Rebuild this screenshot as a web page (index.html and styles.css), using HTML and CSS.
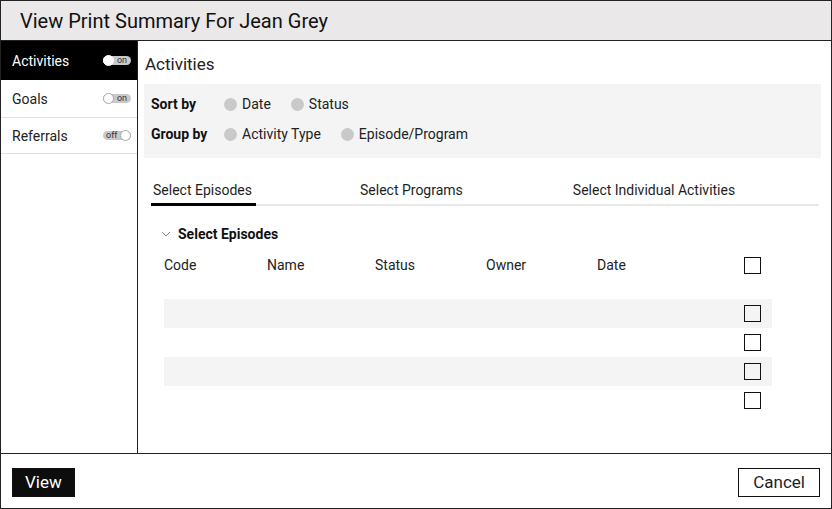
FILE: index.html
```html
<!DOCTYPE html>
<html lang="en">
<head>
  <meta charset="UTF-8">
  <meta name="viewport" content="width=device-width, initial-scale=1.0">
  <title>View Print Summary</title>
  <link rel="stylesheet" href="styles.css">
</head>
<body>
  <div class="dialog">
    <div class="dialog-header">View Print Summary For Jean Grey</div>

    <div class="dialog-body">
      <ul class="side-nav">
        <li class="nav-item active">
          <span>Activities</span>
          <span class="toggle on"><span class="knob"></span><span class="toggle-text">on</span></span>
        </li>
        <li class="nav-item">
          <span>Goals</span>
          <span class="toggle on"><span class="knob"></span><span class="toggle-text">on</span></span>
        </li>
        <li class="nav-item short">
          <span>Referrals</span>
          <span class="toggle off"><span class="toggle-text">off</span><span class="knob"></span></span>
        </li>
      </ul>

      <div class="main">
        <h2 class="main-title">Activities</h2>

        <div class="options-panel">
          <div class="option-row">
            <span class="option-label">Sort by</span>
            <span class="radio"><span class="dot"></span>Date</span>
            <span class="radio"><span class="dot"></span>Status</span>
          </div>
          <div class="option-row">
            <span class="option-label">Group by</span>
            <span class="radio"><span class="dot"></span>Activity Type</span>
            <span class="radio"><span class="dot"></span>Episode/Program</span>
          </div>
        </div>

        <div class="tabs">
          <div class="tab active">Select Episodes</div>
          <div class="tab tab-programs">Select Programs</div>
          <div class="tab tab-individual">Select Individual Activities</div>
        </div>

        <div class="section-title">
          <svg class="chevron" width="10" height="6" viewBox="0 0 10 6">
            <path d="M1 1 L5 5 L9 1" fill="none" stroke="#8a8a8a" stroke-width="1"/>
          </svg>
          Select Episodes
        </div>

        <div class="episodes">
          <div class="ep-row ep-head">
            <span class="col-code">Code</span>
            <span class="col-name">Name</span>
            <span class="col-status">Status</span>
            <span class="col-owner">Owner</span>
            <span class="col-date">Date</span>
            <span class="col-check"><span class="checkbox"></span></span>
          </div>
          <div class="ep-rows">
            <div class="ep-row striped">
              <span class="col-code"></span><span class="col-name"></span><span class="col-status"></span>
              <span class="col-owner"></span><span class="col-date"></span>
              <span class="col-check"><span class="checkbox"></span></span>
            </div>
            <div class="ep-row">
              <span class="col-code"></span><span class="col-name"></span><span class="col-status"></span>
              <span class="col-owner"></span><span class="col-date"></span>
              <span class="col-check"><span class="checkbox"></span></span>
            </div>
            <div class="ep-row striped">
              <span class="col-code"></span><span class="col-name"></span><span class="col-status"></span>
              <span class="col-owner"></span><span class="col-date"></span>
              <span class="col-check"><span class="checkbox"></span></span>
            </div>
            <div class="ep-row">
              <span class="col-code"></span><span class="col-name"></span><span class="col-status"></span>
              <span class="col-owner"></span><span class="col-date"></span>
              <span class="col-check"><span class="checkbox"></span></span>
            </div>
          </div>
        </div>
      </div>
    </div>

    <div class="dialog-footer">
      <button class="btn btn-primary">View</button>
      <button class="btn btn-outline">Cancel</button>
    </div>
  </div>
</body>
</html>
```

FILE: styles.css
```css
* {
  box-sizing: border-box;
}
body {
  margin: 0;
  font-family: Roboto, "Liberation Sans", Arial, sans-serif;
  color: #1e1e1e;
  background: #fff;
}
.dialog {
  width: 832px;
  height: 509px;
  border: 1px solid #222;
  display: flex;
  flex-direction: column;
}
.dialog-header {
  height: 40px;
  border-bottom: 1px solid #222;
  background: #eae8e8;
  padding-left: 19px;
  font-size: 20px;
  line-height: 40px;
  color: #111;
}
.dialog-body {
  display: flex;
  height: 413px;
  border-bottom: 1px solid #222;
}

/* side navigation */
.side-nav {
  list-style: none;
  margin: 0;
  padding: 0;
  width: 137px;
  border-right: 1px solid #222;
}
.nav-item {
  display: flex;
  justify-content: space-between;
  align-items: center;
  height: 38px;
  padding: 0 6px 0 11px;
  border-bottom: 1px solid #e2e2e2;
  font-size: 14px;
  color: #222;
}
.nav-item.short {
  height: 36px;
}
.nav-item.active {
  height: 39px;
  background: #000;
  color: #fff;
  border-bottom: none;
}
.toggle {
  display: inline-flex;
  align-items: center;
  width: 28px;
  height: 9px;
  border-radius: 5px;
  background: #c9c9c9;
  font-size: 9px;
  line-height: 9px;
  color: #333;
}
.toggle.on {
  justify-content: space-between;
  padding-right: 4px;
}
.toggle.off {
  justify-content: space-between;
  padding-left: 3px;
}
.knob {
  width: 11px;
  height: 11px;
  border-radius: 50%;
  background: #fff;
  border: 1px solid #a9a9a9;
}
.nav-item.active .knob {
  border-color: #fff;
}

/* main area */
.main {
  flex: 1;
  padding: 13px 10px 0 6px;
}
.main-title {
  margin: 0 0 10px 1px;
  font-size: 17px;
  font-weight: normal;
  line-height: 20px;
  color: #222;
}
.options-panel {
  background: #f4f4f4;
  height: 74px;
  padding: 5px 0 0 7px;
}
.option-row {
  display: flex;
  align-items: center;
  height: 30px;
  font-size: 14px;
  color: #222;
}
.option-label {
  width: 73px;
  font-weight: bold;
  color: #111;
}
.radio {
  display: inline-flex;
  align-items: center;
  margin-right: 20px;
}
.dot {
  width: 13px;
  height: 13px;
  border-radius: 50%;
  background: #c9c9c9;
  margin-right: 5px;
}

/* tabs */
.tabs {
  display: flex;
  margin: 24px 2px 0 7px;
  border-bottom: 2px solid #e8e8e8;
  height: 24px;
}
.tab {
  font-size: 14px;
  line-height: 16px;
  padding: 0 2px 5px 2px;
  height: 24px;
  color: #1e1e1e;
}
.tab.active {
  width: 105px;
  border-bottom: 3px solid #000;
}
.tab-programs {
  margin-left: 102px;
}
.tab-individual {
  margin-left: 106px;
}

.section-title {
  display: flex;
  align-items: center;
  margin: 20px 0 0 17px;
  font-size: 14px;
  line-height: 16px;
  font-weight: bold;
  color: #111;
}
.chevron {
  margin-right: 7px;
}

/* episodes table */
.episodes {
  margin: 8px 0 0 20px;
  width: 608px;
}
.ep-row {
  display: flex;
  align-items: center;
  height: 29px;
  font-size: 14px;
  color: #222;
}
.ep-head {
  height: 30px;
}
.ep-rows {
  margin-top: 19px;
}
.ep-row.striped {
  background: #f4f4f4;
}
.col-code { width: 103px; }
.col-name { width: 108px; }
.col-status { width: 111px; }
.col-owner { width: 111px; }
.col-date { width: 147px; }
.col-check {
  width: 28px;
  display: flex;
  align-items: center;
}
.checkbox {
  width: 17px;
  height: 17px;
  border: 1.5px solid #111;
  background: transparent;
}

/* footer */
.dialog-footer {
  flex: 1;
  display: flex;
  justify-content: space-between;
  align-items: center;
  padding: 3px 11px 0 11px;
}
.btn {
  font-family: Roboto, "Liberation Sans", Arial, sans-serif;
  font-size: 17px;
  height: 29px;
  line-height: 27px;
  border: 1px solid #111;
  border-radius: 0;
  cursor: pointer;
}
.btn-primary {
  background: #0d0d0d;
  color: #fff;
  padding: 0 12px;
}
.btn-outline {
  background: #fff;
  color: #1e1e1e;
  padding: 0 14px;
}
```
